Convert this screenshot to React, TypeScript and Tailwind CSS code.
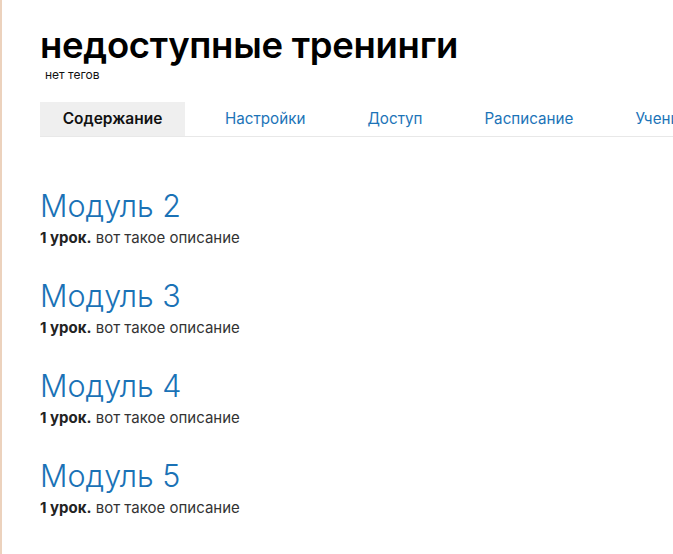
import React from "react";

const tabs = ["Содержание", "Настройки", "Доступ", "Расписание", "Ученики"];
const modules = ["Модуль 2", "Модуль 3", "Модуль 4", "Модуль 5"];

export default function App() {
  return (
    <div
      className="w-[673px] h-[554px] overflow-hidden bg-white border-l-2 border-[#ecd2bd]"
      style={{ fontFamily: "Inter, 'Noto Sans', sans-serif" }}
    >
      <div className="pl-[38px] pt-[23px]">
        <h1 className="text-[36.5px] leading-[44px] font-semibold text-black tracking-[-0.3px]">
          недоступные тренинги
        </h1>
        <div className="pl-[5px] pt-[1px] text-[12px] leading-[14px] text-[#111]">нет тегов</div>
        <div className="mt-[20px] flex border-b border-[#e8e8e8] whitespace-nowrap">
          {tabs.map((t, i) => (
            <div
              key={t}
              className={
                i === 0
                  ? "shrink-0 w-[145px] h-[34px] flex items-center justify-center bg-[#efefef] text-[15.5px] font-semibold text-[#111]"
                  : "shrink-0 h-[34px] flex items-center px-[22px] ml-[18px] text-[15.2px] text-[#1c74b8]"
              }
            >
              {t}
            </div>
          ))}
        </div>
        <div className="mt-[53px] flex flex-col gap-[34px]">
          {modules.map((m) => (
            <div key={m}>
              <div className="text-[30.5px] leading-[32px] font-light text-[#1a72b6]">{m}</div>
              <div className="mt-[7px] text-[15px] leading-[17px] text-[#333]">
                <span className="font-bold text-[#222]">1 урок.</span> вот такое описание
              </div>
            </div>
          ))}
        </div>
      </div>
    </div>
  );
}
